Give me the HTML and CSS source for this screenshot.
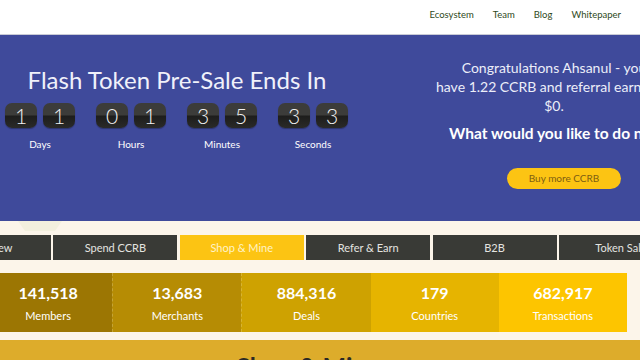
FILE: index.html
```html
<!DOCTYPE html>
<html lang="en">
<head>
  <meta charset="UTF-8">
  <meta name="viewport" content="width=device-width, initial-scale=1.0">
  <title>CCRB - Shop &amp; Mine</title>
  <link rel="stylesheet" href="styles.css">
</head>
<body>
  <header class="topbar">
    <nav class="topnav">
      <a href="#">Ecosystem</a>
      <a href="#">Team</a>
      <a href="#">Blog</a>
      <a href="#">Whitepaper</a>
    </nav>
  </header>

  <section class="hero">
    <div class="countdown">
      <h1>Flash Token Pre-Sale Ends In</h1>
      <div class="timer">
        <div class="unit">
          <div class="digits"><span>1</span><span>1</span></div>
          <div class="unit-label">Days</div>
        </div>
        <div class="unit">
          <div class="digits"><span>0</span><span>1</span></div>
          <div class="unit-label">Hours</div>
        </div>
        <div class="unit">
          <div class="digits"><span>3</span><span>5</span></div>
          <div class="unit-label">Minutes</div>
        </div>
        <div class="unit">
          <div class="digits"><span>3</span><span>3</span></div>
          <div class="unit-label">Seconds</div>
        </div>
      </div>
    </div>

    <div class="welcome">
      <p>Congratulations Ahsanul - you<br>have 1.22 CCRB and referral earnings of<br>$0.</p>
      <h3>What would you like to do now?</h3>
      <a class="btn-buy" href="#">Buy more CCRB</a>
    </div>
  </section>

  <div class="notch-row"><span class="notch"></span></div>

  <div class="tabs">
    <div class="tab-track">
      <a class="tab" href="#">Overview</a>
      <a class="tab" href="#">Spend CCRB</a>
      <a class="tab active" href="#">Shop &amp; Mine</a>
      <a class="tab" href="#">Refer &amp; Earn</a>
      <a class="tab" href="#">B2B</a>
      <a class="tab" href="#">Token Sale</a>
    </div>
  </div>

  <div class="stats">
    <div class="stat-track">
      <div class="stat s1"><strong>141,518</strong><span>Members</span></div>
      <div class="stat s2"><strong>13,683</strong><span>Merchants</span></div>
      <div class="stat s3"><strong>884,316</strong><span>Deals</span></div>
      <div class="stat s4"><strong>179</strong><span>Countries</span></div>
      <div class="stat s5"><strong>682,917</strong><span>Transactions</span></div>
    </div>
  </div>

  <section class="shop">
    <h2>Shop &amp; Mine</h2>
  </section>
</body>
</html>
```

FILE: styles.css
```css
html, body {
  margin: 0;
  padding: 0;
}
body {
  font-family: Lato, 'Open Sans', sans-serif;
  background: #fcf5ea;
  color: #fff;
  width: 640px;
  overflow: hidden;
}
a {
  text-decoration: none;
}

/* top bar */
.topbar {
  background: #fff;
  height: 34px;
  border-bottom: 1px solid #c9cbd6;
  display: flex;
  justify-content: flex-end;
}
.topnav {
  display: flex;
  gap: 19px;
  padding: 9px 19px 0 0;
}
.topnav a {
  color: #2f4a22;
  font-size: 9.5px;
  line-height: 12px;
}

/* hero */
.hero {
  background: #3f4a9b;
  height: 186px;
  display: flex;
}
.countdown {
  width: 354px;
  flex: none;
  text-align: center;
}
.countdown h1 {
  margin: 30px 0 0;
  font-size: 24px;
  font-weight: 400;
  line-height: 30px;
  color: #f0f1fa;
}
.timer {
  display: flex;
  gap: 21px;
  padding: 8px 0 0 5px;
}
.unit {
  width: 70px;
}
.digits {
  display: flex;
  gap: 6px;
}
.digits span {
  width: 32px;
  height: 25px;
  border-radius: 7px;
  background: linear-gradient(#3c3c3a 0, #3c3c3a 49%, #1d1d1c 51%, #2a2a28 100%);
  color: #f2f2f2;
  font-size: 21px;
  line-height: 25px;
  font-weight: 300;
  box-shadow: 0 1px 1px rgba(0, 0, 0, 0.3);
}
.unit-label {
  margin-top: 10px;
  font-size: 10px;
  line-height: 12px;
  color: #fff;
}

.welcome {
  width: 236px;
  flex: none;
  margin-left: 82px;
  text-align: center;
  color: #eceef9;
}
.welcome p {
  margin: 23px 0 0;
  font-size: 14px;
  line-height: 19px;
  font-weight: 400;
  white-space: nowrap;
}
.welcome h3 {
  margin: 8px 0 0;
  font-size: 15.5px;
  line-height: 20px;
  font-weight: 700;
  color: #fff;
  white-space: nowrap;
  text-indent: 12px;
}
.btn-buy {
  display: inline-block;
  margin: 25px 0 0 20px;
  width: 114px;
  height: 21px;
  line-height: 21px;
  border-radius: 11px;
  background: #fcc413;
  color: #7d5e12;
  font-size: 10px;
}

/* pointer under hero */
.notch-row {
  height: 14px;
}
.notch {
  display: block;
  margin-left: 18px;
  width: 44px;
  height: 10px;
  background: #f3f0de;
  clip-path: polygon(0 0, 100% 0, 84% 100%, 16% 100%);
}

/* tabs */
.tabs {
  overflow: hidden;
  height: 25px;
}
.tab-track {
  display: flex;
  gap: 2.4px;
  margin-left: -73px;
}
.tab {
  flex: 0 0 124px;
  height: 25px;
  line-height: 25px;
  text-align: center;
  background: #393a36;
  color: #e4e4e0;
  font-size: 11px;
}
.tab.active {
  background: #fcc413;
  color: #fff3c8;
}

/* stats */
.stats {
  margin-top: 13px;
  overflow: hidden;
}
.stat-track {
  display: flex;
  margin-left: -16px;
  width: 643px;
}
.stat {
  flex: 1;
  height: 59px;
  text-align: center;
  display: flex;
  flex-direction: column;
  justify-content: center;
  gap: 6px;
  color: #fff;
}
.stat strong {
  font-size: 16px;
  line-height: 20px;
  font-weight: 700;
}
.stat span {
  font-size: 11px;
  line-height: 14px;
}
.s1 { background: #9c7603; }
.s2 { background: #b68c04; border-left: 1px dashed rgba(255, 255, 255, 0.2); }
.s3 { background: #cea201; border-left: 1px dashed rgba(255, 255, 255, 0.2); }
.s4 { background: #e6b400; }
.s5 { background: #fdc500; }

/* shop section */
.shop {
  margin-top: 8px;
  background: #ddac2b;
  height: 80px;
  text-align: center;
  padding-right: 24px;
}
.shop h2 {
  margin: 0;
  padding-top: 11px;
  font-size: 25px;
  line-height: 30px;
  font-weight: 700;
  color: #2c2a26;
}
```
